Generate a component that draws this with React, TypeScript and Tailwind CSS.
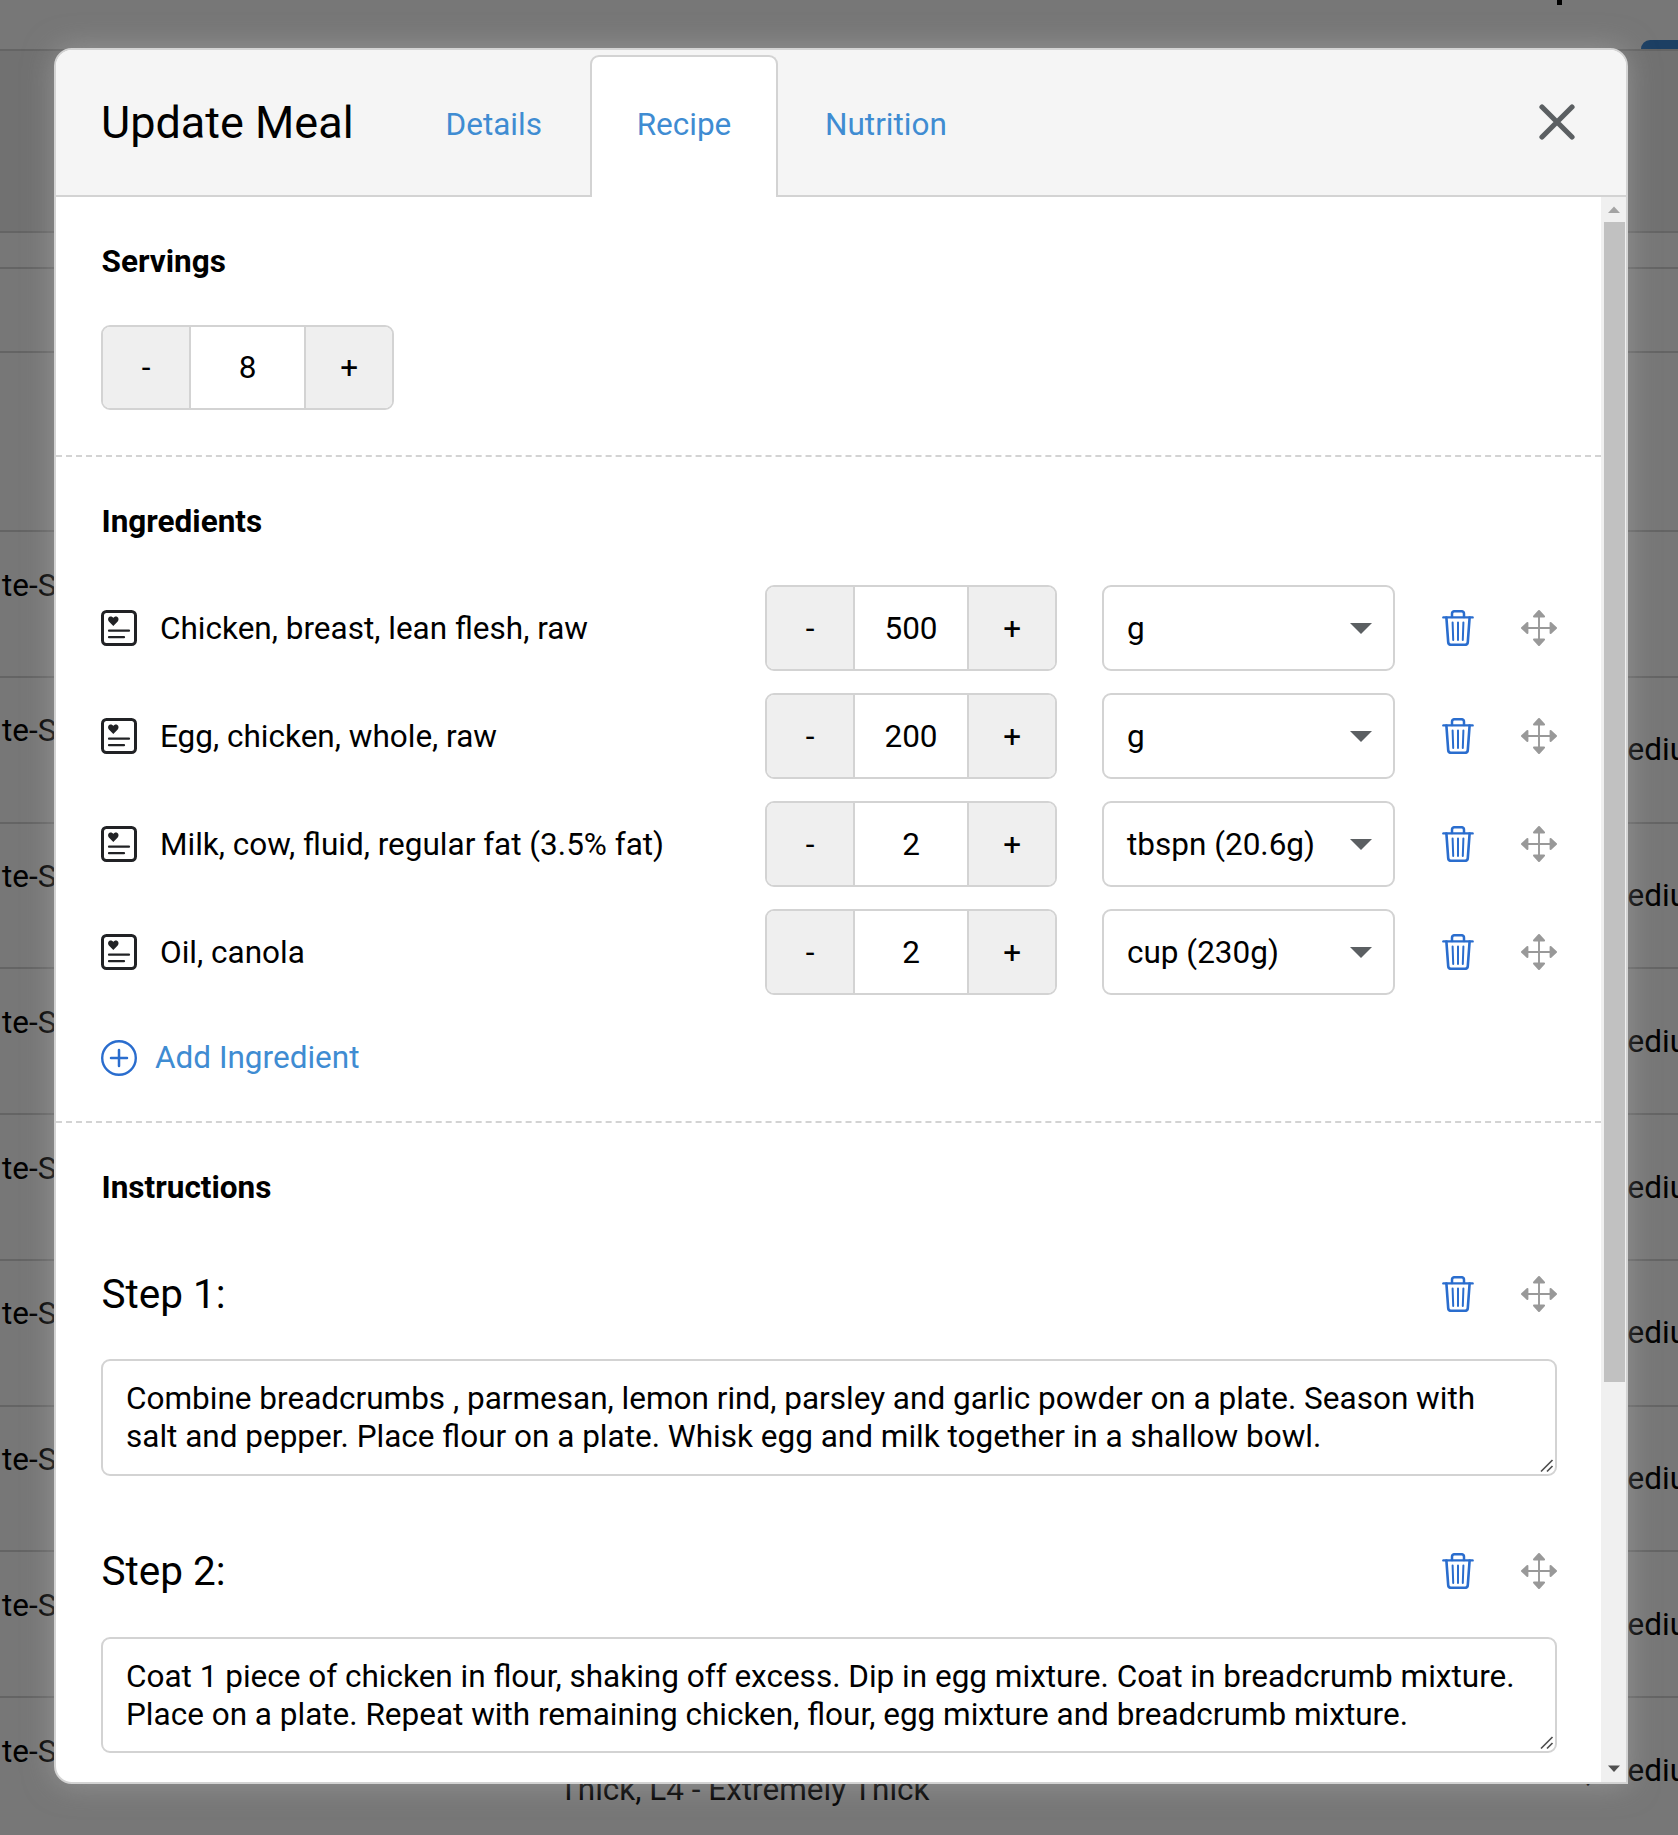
import React from "react";

const ROWS = [0, 1, 2, 3, 4, 5, 6, 7, 8];

const INGREDIENTS = [
  { name: "Chicken, breast, lean flesh, raw", qty: "500", unit: "g" },
  { name: "Egg, chicken, whole, raw", qty: "200", unit: "g" },
  { name: "Milk, cow, fluid, regular fat (3.5% fat)", qty: "2", unit: "tbspn (20.6g)" },
  { name: "Oil, canola", qty: "2", unit: "cup (230g)" },
];

const STEPS = [
  {
    title: "Step 1:",
    lines: [
      "Combine breadcrumbs , parmesan, lemon rind, parsley and garlic powder on a plate. Season with",
      "salt and pepper. Place flour on a plate. Whisk egg and milk together in a shallow bowl.",
    ],
  },
  {
    title: "Step 2:",
    lines: [
      "Coat 1 piece of chicken in flour, shaking off excess. Dip in egg mixture. Coat in breadcrumb mixture.",
      "Place on a plate. Repeat with remaining chicken, flour, egg mixture and breadcrumb mixture.",
    ],
  },
];

function CardIcon() {
  return (
    <svg width="36" height="36" viewBox="0 0 36 36" fill="none" stroke="#212225" className="shrink-0">
      <rect x="1.5" y="1.5" width="33" height="33" rx="4" strokeWidth="3" />
      <path
        d="M12.3 16 L7.9 11.4 C6.6 9.8 6.9 7.8 8.2 6.9 C9.6 6 11.4 6.4 12.3 7.9 C13.2 6.4 15 6 16.4 6.9 C17.7 7.8 18 9.8 16.7 11.4 Z"
        fill="#212225"
        stroke="none"
      />
      <path d="M8 20.7 H28 M8 27.2 H23" strokeWidth="2.2" strokeLinecap="round" />
    </svg>
  );
}

function TrashIcon() {
  return (
    <svg width="36" height="36" viewBox="0 0 36 36" fill="none" stroke="#2a6dce" strokeLinecap="round" strokeLinejoin="round" className="shrink-0">
      <path d="M3.4 7.4 H32.6" strokeWidth="2.4" />
      <path d="M12 7 V3.8 Q12 1.2 14.6 1.2 H21.4 Q24 1.2 24 3.8 V7" strokeWidth="2.5" />
      <path d="M6.4 7.6 L8.2 32.2 Q8.4 34.8 10.8 34.8 H25.2 Q27.6 34.8 27.8 32.2 L29.6 7.6" strokeWidth="2.6" />
      <path d="M12.6 12.4 L13.2 30 M18 12.4 V30 M23.4 12.4 L22.8 30" strokeWidth="2" />
    </svg>
  );
}

function MoveIcon() {
  return (
    <svg width="36" height="36" viewBox="0 0 36 36" fill="#999999" stroke="#999999" strokeLinejoin="round" className="shrink-0">
      <path d="M18 6 V30 M6 18 H30" strokeWidth="1.9" />
      <path
        d="M18 1 L23 6.4 H13 Z M18 35 L23 29.6 H13 Z M1 18 L6.4 13 V23 Z M35 18 L29.6 13 V23 Z"
        strokeWidth="2"
      />
    </svg>
  );
}

function Stepper({ value }: { value: string }) {
  return (
    <div className="flex h-full w-full overflow-hidden rounded-[9px] border-2 border-[#d3d3d3] bg-white">
      <button className="flex w-[88px] items-center justify-center border-r-2 border-[#d3d3d3] bg-[#efefef] pt-[1px]">-</button>
      <span className="flex flex-1 items-center justify-center pt-[1px]">{value}</span>
      <button className="flex w-[88px] items-center justify-center border-l-2 border-[#d3d3d3] bg-[#efefef] pl-[0.5px] pt-[1px]">+</button>
    </div>
  );
}

function Background() {
  return (
    <div className="flex h-full flex-col bg-[#777777]">
      <div className="flex h-[51px] shrink-0 items-end justify-end border-b-2 border-[#646464]">
        <div className="mr-[79px] h-[5px] w-[5px] self-start bg-black" />
        <div className="h-[9px] w-[37px] rounded-tl-[9px] bg-[#1c3f63]" />
      </div>
      <div className="h-[182px] shrink-0 border-b-2 border-[#646464] bg-[#717171]" />
      <div className="h-[36px] shrink-0 border-b-2 border-[#646464]" />
      <div className="h-[84px] shrink-0 border-b-2 border-[#646464]" />
      <div className="h-[179px] shrink-0 border-b-2 border-[#646464]" />
      {ROWS.map((i) => (
        <div key={i} className="flex h-[145.75px] shrink-0 border-b-2 border-[#646464]">
          <div className="w-[84px] shrink-0 whitespace-nowrap pl-[2px] pt-[34.7px]">te-Soft</div>
          <div className="w-[1502px] shrink-0 whitespace-nowrap pl-[475px] pt-[73px]">
            {i === 8 ? "Thick, L4 - Extremely Thick" : ""}
          </div>
          <div className="shrink-0 whitespace-nowrap pt-[53.7px]">{i > 0 ? ", Medium" : ""}</div>
        </div>
      ))}
    </div>
  );
}

function Scrollbar() {
  return (
    <div className="flex w-[25px] shrink-0 flex-col items-center bg-[#f0f0f0]">
      <svg width="12" height="25" viewBox="0 0 12 25" className="shrink-0">
        <path d="M0 16 L6 9.5 L12 16 Z" fill="#a3a3a3" />
      </svg>
      <div className="ml-[1px] h-[1160px] w-[21px] shrink-0 bg-[#c1c1c1]" />
      <div className="flex-1" />
      <svg width="12" height="25" viewBox="0 0 12 25" className="shrink-0">
        <path d="M0 8.6 L12 8.6 L6 15 Z" fill="#505050" />
      </svg>
    </div>
  );
}

export default function App() {
  return (
    <div className="relative h-[1835px] w-full overflow-hidden font-['Roboto',sans-serif] text-[31.5px] leading-[38px] text-black">
      <Background />

      <div className="absolute left-[54px] top-[48px] flex h-[1736px] w-[1574px] flex-col rounded-[18px] rounded-br-none border-2 border-[#d3d3d3] bg-white shadow-[0_0_30px_rgba(180,180,180,0.5)]">
        <header className="flex h-[147px] shrink-0 items-stretch rounded-t-[16px] bg-[#f5f5f5]">
          <h1 className="flex w-[344px] shrink-0 items-center border-b-2 border-[#d3d3d3] pl-[45px] text-[45px] leading-[52px]">
            Update Meal
          </h1>
          <a className="flex w-[190px] items-center border-b-2 border-[#d3d3d3] pl-[45.5px] pt-[5px] text-[#3f8cd2]">Details</a>
          <a className="mt-[5px] flex w-[188px] items-center justify-center rounded-t-[9px] border-2 border-b-0 border-[#d3d3d3] bg-white pb-[5px] text-[#3f8cd2]">
            Recipe
          </a>
          <a className="flex flex-1 items-center border-b-2 border-[#d3d3d3] pl-[47px] pt-[5px] text-[#3f8cd2]">Nutrition</a>
          <button className="flex items-center border-b-2 border-[#d3d3d3] pb-[1px] pr-[51.5px]">
            <svg width="36" height="36" viewBox="0 0 36 36" stroke="#5b5f62" strokeWidth="5.2" strokeLinecap="round">
              <path d="M3 3 L33 33 M33 3 L3 33" />
            </svg>
          </button>
        </header>

        <div className="flex min-h-0 flex-1">
          <main className="flex min-w-0 flex-1 flex-col overflow-hidden rounded-bl-[16px]">
            <section className="h-[260px] shrink-0 border-b-2 border-dashed border-[#d3d3d3] px-[45px] pt-[46px]">
              <h2 className="pl-[0.5px] font-bold">Servings</h2>
              <div className="mt-[44px] h-[85px] w-[293px]">
                <Stepper value="8" />
              </div>
            </section>

            <section className="h-[666px] shrink-0 border-b-2 border-dashed border-[#d3d3d3] pl-[45px] pr-[44px] pt-[46px]">
              <h2 className="pl-[0.5px] font-bold">Ingredients</h2>
              <div className="mt-[44px] flex flex-col gap-[22px]">
                {INGREDIENTS.map((item) => (
                  <div key={item.name} className="flex h-[86px] items-center">
                    <CardIcon />
                    <span className="ml-[23px] w-[605px] whitespace-nowrap pt-[2px]">{item.name}</span>
                    <div className="h-full w-[292px]">
                      <Stepper value={item.qty} />
                    </div>
                    <div className="ml-[45px] flex h-full w-[293px] items-center justify-between whitespace-nowrap rounded-[9px] border-2 border-[#d3d3d3] pl-[23px] pr-[21px]">
                      <span className="pt-[1px]">{item.unit}</span>
                      <svg width="22" height="11" viewBox="0 0 22 11" className="shrink-0">
                        <path d="M0 0 H22 L11 11 Z" fill="#5b5f62" />
                      </svg>
                    </div>
                    <div className="ml-[45px] flex gap-[45px]">
                      <TrashIcon />
                      <MoveIcon />
                    </div>
                  </div>
                ))}
              </div>
              <a className="mt-[45px] flex h-[36px] items-center gap-[18px] text-[#3f8cd2]">
                <svg width="36" height="36" viewBox="0 0 36 36" fill="none" stroke="#2a6dce" strokeLinecap="round">
                  <circle cx="18" cy="18" r="16.8" strokeWidth="2.4" />
                  <path d="M18 10 V26 M10 18 H26" strokeWidth="2.5" />
                </svg>
                Add Ingredient
              </a>
            </section>

            <section className="shrink-0 pl-[45px] pr-[44px] pt-[46px]">
              <h2 className="pl-[0.5px] font-bold">Instructions</h2>
              <div className="mt-[69px] flex flex-col gap-[77.3px]">
                {STEPS.map((step) => (
                  <div key={step.title}>
                    <div className="flex h-[36px] items-center">
                      <h3 className="flex-1 pl-[0.5px] text-[40.5px] leading-[47px]">{step.title}</h3>
                      <div className="flex gap-[45px]">
                        <TrashIcon />
                        <MoveIcon />
                      </div>
                    </div>
                    <div className="relative mt-[47.4px] h-[116.5px] rounded-[9px] border-2 border-[#d3d3d3] pl-[23px] pt-[19px]">
                      {step.lines.map((line) => (
                        <p key={line} className="whitespace-nowrap">
                          {line}
                        </p>
                      ))}
                      <svg width="14" height="14" viewBox="0 0 14 14" className="absolute bottom-[1px] right-[1.5px]" stroke="#505050" strokeWidth="1.7">
                        <path d="M1 12.5 L12.5 1 M7 12.5 L12.5 7" />
                      </svg>
                    </div>
                  </div>
                ))}
              </div>
            </section>
          </main>
          <Scrollbar />
        </div>
      </div>
    </div>
  );
}
